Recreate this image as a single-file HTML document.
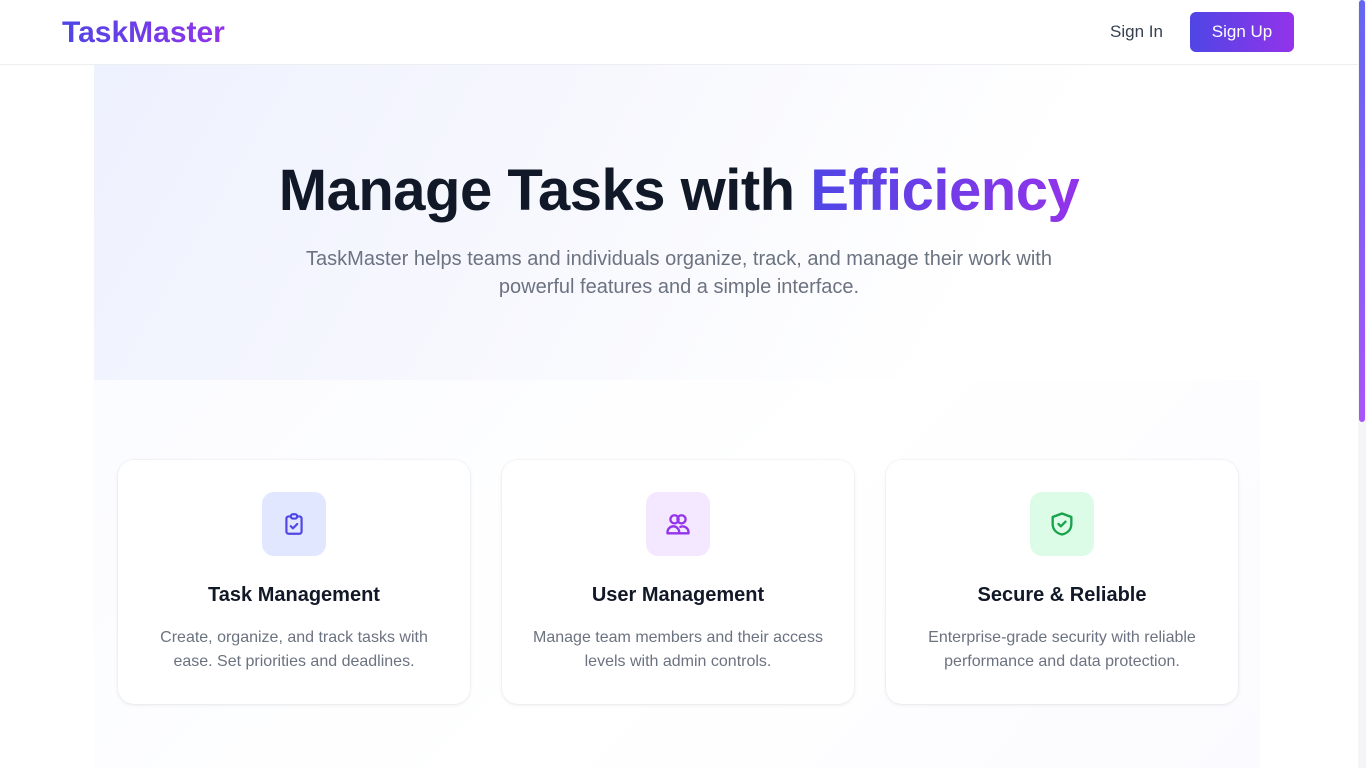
<!DOCTYPE html>
<html><head><meta charset="utf-8"><style>
*{margin:0;padding:0;box-sizing:border-box}
body{width:1366px;height:768px;overflow:hidden;font-family:"Liberation Sans",sans-serif;background:#fff;position:relative}
.sb{position:absolute;right:0;top:0;width:8px;height:768px;background:#f5f5f7}
.sb div{position:absolute;left:1px;top:0;width:6px;height:422px;border-radius:3px;background:linear-gradient(#6366f1,#a855f7)}
nav{position:absolute;left:0;top:0;width:1358px;height:65px;border-bottom:1px solid #eceef2;background:#fff}
.logo{position:absolute;left:62px;top:16px;font-size:30px;font-weight:bold;background:linear-gradient(90deg,#4f46e5,#9333ea);-webkit-background-clip:text;color:transparent}
.si{position:absolute;left:1110px;top:22px;font-size:17px;color:#374151}
.su{position:absolute;left:1190px;top:12px;width:104px;height:40px;border-radius:6px;background:linear-gradient(90deg,#4f46e5,#9333ea);color:#fff;font-size:17px;text-align:center;line-height:40px}
.bg{position:absolute;left:94px;top:65px;width:1166px;height:703px;background:linear-gradient(135deg,#f9faff,#ffffff 60%,#fbfbff)}
.hero{position:absolute;left:94px;top:65px;width:1166px;height:315px;background:linear-gradient(120deg,#eef1fe 0%,#f7f8fe 40%,#fff 75%)}
h1{position:absolute;left:0;width:1358px;top:157px;text-align:center;font-size:58px;font-weight:bold;color:#111827;letter-spacing:-0.5px}
h1 span{background:linear-gradient(90deg,#4f46e5,#9333ea);-webkit-background-clip:text;color:transparent}
.sub{position:absolute;left:0;width:1358px;top:245px;text-align:center;font-size:20px;line-height:28px;color:#6b7280}
.card{position:absolute;top:460px;width:352px;height:244px;background:#fff;border-radius:16px;box-shadow:0 1px 4px rgba(0,0,0,.08),0 0 0 1px rgba(0,0,0,.02);text-align:center}
.ic{position:absolute;left:144px;top:32px;width:64px;height:64px;border-radius:12px;display:flex;align-items:center;justify-content:center}
.card h3{position:absolute;top:124px;width:100%;font-size:20px;color:#111827}
.card p{position:absolute;top:166px;width:100%;font-size:16px;line-height:24px;color:#6b7280}
</style></head><body>
<div class="bg"></div><div class="hero"></div>
<nav><div class="logo">TaskMaster</div><div class="si">Sign In</div><div class="su">Sign Up</div></nav>
<h1>Manage Tasks with <span>Efficiency</span></h1>
<div class="sub">TaskMaster helps teams and individuals organize, track, and manage their work with<br>powerful features and a simple interface.</div>
<div class="card" style="left:118px"><div class="ic" style="background:#e0e7ff"><svg width="26" height="26" viewBox="0 0 24 24" fill="none" stroke="#4f46e5" stroke-width="2" stroke-linecap="round" stroke-linejoin="round"><path d="M9 5H7a2 2 0 0 0-2 2v12a2 2 0 0 0 2 2h10a2 2 0 0 0 2-2V7a2 2 0 0 0-2-2h-2"/><rect x="9" y="3" width="6" height="4" rx="2"/><path d="M9 14l2 2 4-4"/></svg></div><h3>Task Management</h3><p>Create, organize, and track tasks with<br>ease. Set priorities and deadlines.</p></div>
<div class="card" style="left:502px"><div class="ic" style="background:#f3e8ff"><svg width="28" height="28" viewBox="0 0 24 24" fill="none" stroke="#9333ea" stroke-width="2" stroke-linecap="round" stroke-linejoin="round"><circle cx="9" cy="8" r="3.5"/><circle cx="15" cy="8" r="3.5"/><path d="M3 20v-1a5 5 0 0 1 10 0v1zM13 20h8v-1a5 5 0 0 0-7-4.5"/></svg></div><h3>User Management</h3><p>Manage team members and their access<br>levels with admin controls.</p></div>
<div class="card" style="left:886px"><div class="ic" style="background:#dcfce7"><svg width="28" height="28" viewBox="0 0 24 24" fill="none" stroke="#16a34a" stroke-width="2" stroke-linecap="round" stroke-linejoin="round"><path d="M12 3l8 3v6c0 5-3.5 8-8 9-4.5-1-8-4-8-9V6z"/><path d="M9 12l2 2 4-4"/></svg></div><h3>Secure &amp; Reliable</h3><p>Enterprise-grade security with reliable<br>performance and data protection.</p></div>
<div class="sb"><div></div></div>
</body></html>
